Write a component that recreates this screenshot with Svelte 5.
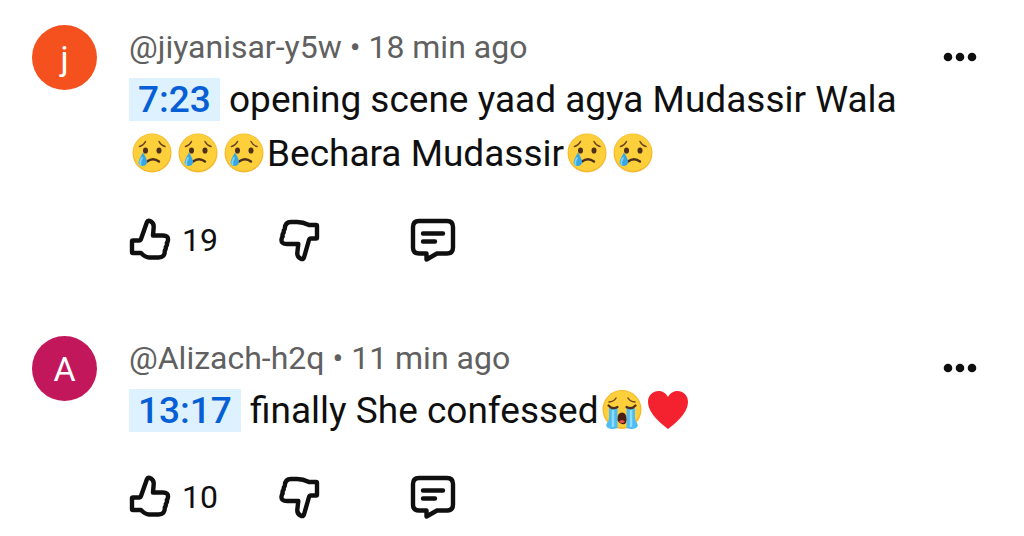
<script>
  const comments = [
    {
      initial: 'j',
      color: '#f4511e',
      author: '@jiyanisar-y5w',
      age: '18 min ago',
      time: '7:23',
      likes: 19,
      body: [
        ' opening scene yaad agya Mudassir Wala ',
        { emoji: 'cry' },
        { emoji: 'cry' },
        { emoji: 'cry' },
        'Bechara Mudassir',
        { emoji: 'cry' },
        { emoji: 'cry' }
      ]
    },
    {
      initial: 'A',
      color: '#c2185b',
      author: '@Alizach-h2q',
      age: '11 min ago',
      time: '13:17',
      likes: 10,
      body: [' finally She confessed', { emoji: 'sob' }, { emoji: 'heart' }]
    }
  ];
</script>

{#snippet emoji(name)}
  {#if name === 'cry'}
    <svg class="emoji" viewBox="0 0 40 40" role="img" aria-label="crying face">
      <circle cx="20" cy="20" r="19.5" fill="#f5b82e" />
      <circle cx="20" cy="19.4" r="18.4" fill="#fdd03b" />
      <path d="M7.500 13.500q4-1 6-5M27 8.500q2 4 6 5" fill="none" stroke="#6d4324" stroke-width="1.500" stroke-linecap="round" />
      <ellipse cx="13.500" cy="17.500" rx="2.500" ry="3.100" fill="#4e2f1b" />
      <ellipse cx="27" cy="17.500" rx="2.500" ry="3.100" fill="#4e2f1b" />
      <path d="M15 28.500q6-4.500 12 0" fill="none" stroke="#4e2f1b" stroke-width="2.400" stroke-linecap="round" />
      <path d="M11 19.500q4.500 7 4 10.500a4.500 4.500 0 0 1-8.500 0q0-3 4.500-10.500z" fill="#35a7e4" />
      <path d="M10 25q-2.500 4-1.500 6.500" fill="none" stroke="#82d3fa" stroke-width="1.800" stroke-linecap="round" />
    </svg>
  {:else if name === 'sob'}
    <svg class="emoji" viewBox="0 0 40 40" role="img" aria-label="loudly crying face">
      <circle cx="20" cy="19.500" r="19.500" fill="#f5b82e" />
      <circle cx="20" cy="19" r="18.200" fill="#fdd03b" />
      <path d="M7 12q5-.5 7-4M26 8q2 3.500 7 4" fill="none" stroke="#6d4324" stroke-width="1.500" stroke-linecap="round" />
      <path d="M7 18h8.500v20q-5 2-9.500 0-3-2-1-5 2-2 2-6zM24.500 18H33v9q0 4 2 6 2 3-1 5-4.500 2-9.500 0z" fill="#4fbcf2" />
      <path d="M11 20v17M29 20v17" stroke="#8edcff" stroke-width="2.500" />
      <path d="M6.500 15.500q4 4.500 9 1.500M33.500 15.500q-4 4.500-9 1.500" fill="none" stroke="#4e2f1b" stroke-width="2.200" stroke-linecap="round" />
      <path d="M15.500 29q0-6.500 4.500-6.500t4.500 6.500-4.500 5-4.500-5z" fill="#4b1f13" />
      <path d="M17 31.500q3-3 6 0-1 1.500-3 1.500t-3-1.500z" fill="#ef5350" />
    </svg>
  {:else}
    <svg class="emoji" viewBox="0 0 40 40" role="img" aria-label="red heart">
      <path d="M20 39Q0 24 0 12C0 5 5 1 10.500 1 15 1 18 3.500 20 7c2-3.500 5-6 9.500-6C35 1 40 5 40 12q0 12-20 27z" fill="#f4212e" />
    </svg>
  {/if}
{/snippet}

<main class="comments">
  {#each comments as comment}
    <article class="comment">
      <div class="avatar" style="background: {comment.color}">{comment.initial}</div>
      <div class="content">
        <header class="meta">{comment.author} • {comment.age}</header>
        <p class="body"><a class="timestamp" href="#{comment.time}">{comment.time}</a>{#each comment.body as part}{#if part.emoji}{@render emoji(part.emoji)}{:else}{part}{/if}{/each}</p>
        <div class="actions">
          <button class="like" aria-label="Like, {comment.likes}">
            <svg class="icon thumb" viewBox="0 0 42 44">
              <path d="M4 22.500h6q1.500 0 2-1.500l6-17q.7-1.800 2.500-1.200 4.500 1.700 4.200 6.200L24 17.500h10q5.500 0 5 4.500-.2 2-1.200 3 .8 2-1 4 .3 2-1 3.500.3 7-6.300 7H20q-3.500 0-8-4.500H4q-1 0-1-1V23.500q0-1 1-1z" />
            </svg>
            <span class="count">{comment.likes}</span>
          </button>
          <button class="dislike" aria-label="Dislike">
            <svg class="icon thumb" viewBox="0 0 42 44">
              <path d="M38 20.500h-5q-1.500 0-2 1.500l-5 17.500q-.7 2-2.700 1.500-4.300-1.700-4-6.200l1-8.800H9q-6 0-5.500-4.500.2-2 1.200-3-.8-2 1-4-.3-2 1-3.500Q7 4 13 4h6q6 0 12 3h7q1 0 1 1v11.500q0 1-1 1z" />
            </svg>
          </button>
          <button class="reply" aria-label="Reply">
            <svg class="icon bubble" viewBox="0 0 46 44">
              <path d="M9 3h28q6 0 6 6v20.500q0 6-6 6H27l-10.500 6V35.500H9q-6 0-6-6V9q0-6 6-6z" />
              <path d="M13 15.500h20M13 23.500h12" stroke-linecap="round" />
            </svg>
          </button>
        </div>
      </div>
      <button class="more" aria-label="More options">
        <svg viewBox="0 0 40 12">
          <circle cx="8" cy="6" r="4.300" />
          <circle cx="20" cy="6" r="4.300" />
          <circle cx="32" cy="6" r="4.300" />
        </svg>
      </button>
    </article>
  {/each}
</main>

<style>
  :global(body) {
    background: #fff;
  }

  .comments {
    display: flex;
    flex-direction: column;
    gap: 74px;
    padding: 25px 44px 16px 32px;
    font-family: Roboto, 'Noto Sans', sans-serif;
    color: #0f0f0f;
  }

  .comment {
    display: flex;
    align-items: flex-start;
  }

  .avatar {
    display: flex;
    flex: none;
    align-items: center;
    justify-content: center;
    width: 65px;
    height: 65px;
    margin-right: 32px;
    border-radius: 50%;
    color: #fff;
    font-size: 34px;
  }

  .content {
    flex: 1;
    min-width: 0;
  }

  .meta {
    color: #606060;
    font-size: 32px;
    line-height: 44px;
  }

  .body {
    margin: 4px 0 37px;
    font-size: 37px;
    line-height: 54px;
  }

  .timestamp {
    padding: 0 9px;
    background: #def1ff;
    color: #065fd4;
    font-weight: 500;
    text-decoration: none;
  }

  .emoji {
    width: 40px;
    height: 40px;
    margin: 0 3px;
    vertical-align: -7px;
  }

  .actions {
    display: flex;
    align-items: center;
  }

  button {
    display: flex;
    align-items: center;
    padding: 0;
    border: 0;
    background: none;
    color: inherit;
    font: inherit;
    cursor: pointer;
  }

  .like {
    width: 149px;
    gap: 11px;
  }

  .dislike {
    width: 132px;
  }

  .count {
    font-size: 32px;
    line-height: 44px;
  }

  .icon {
    height: 44px;
    fill: none;
    stroke: currentColor;
    stroke-width: 4.4;
    stroke-linejoin: round;
  }

  .thumb {
    width: 42px;
  }

  .bubble {
    width: 46px;
  }

  .more {
    flex: none;
    height: 64px;
  }

  .more svg {
    width: 40px;
    fill: currentColor;
  }
</style>
